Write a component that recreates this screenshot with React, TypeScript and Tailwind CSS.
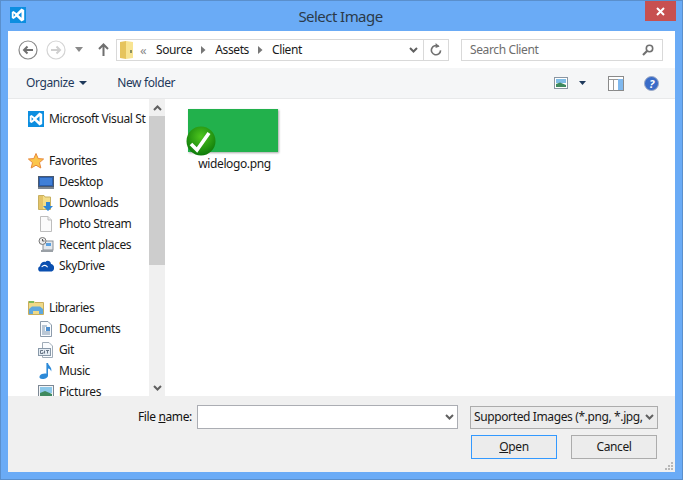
import React from 'react';

const VsIcon = () => (
  <svg width="16" height="16" viewBox="0 0 16 16" className="shrink-0">
    <rect width="16" height="16" fill="#0c8ee0" />
    <path d="M11.5 1.6 L14.2 3 V13 L11.5 14.4 L6.6 9.8 L3.6 12 L1.8 11 V5 L3.6 4 L6.6 6.2 Z" fill="#fff" />
    <path d="M11.5 5.2 L8.4 8 L11.5 10.8 Z M3.6 6.2 V9.8 L5.4 8 Z" fill="#0c8ee0" />
  </svg>
);

const FolderIcon = () => (
  <svg width="13" height="18" viewBox="0 0 13 18" className="shrink-0">
    <path d="M0 1 L6 0 V18 L0 17 Z" fill="#e6c45c" />
    <path d="M6 0 L13 1 V17 L6 18 Z" fill="#f8e492" />
    <rect x="10" y="9" width="2" height="3" fill="#8a8f60" />
  </svg>
);

const Star = () => (
  <svg width="16" height="16" viewBox="0 0 16 16" className="shrink-0">
    <path d="M8 .5 L10.2 5.6 L15.6 6 L11.5 9.6 L12.8 15 L8 12.2 L3.2 15 L4.5 9.6 L.4 6 L5.8 5.6 Z" fill="#fbc64c" stroke="#e8883a" strokeWidth="1" />
  </svg>
);

const Desktop = () => (
  <svg width="16" height="16" viewBox="0 0 16 16" className="shrink-0">
    <rect x="0.5" y="2.5" width="15" height="10" fill="#2a5fb0" stroke="#4a5a70" />
    <rect x="2" y="4" width="12" height="7" fill="#3f7fd8" />
    <rect x="0" y="13" width="16" height="2" fill="#7a8490" />
  </svg>
);

const Downloads = () => (
  <svg width="16" height="16" viewBox="0 0 16 16" className="shrink-0">
    <path d="M.5 .5 H6 L7 2 H12.5 V14.5 H.5 Z" fill="#f3dd88" stroke="#c8b060" strokeWidth="1" />
    <rect x="1" y="1" width="4" height="13" fill="#e3c368" />
    <path d="M8 7 H12 V11 H15 L10 16 L5 11 H8 Z" fill="#2f86d6" />
  </svg>
);

const Page = () => (
  <svg width="16" height="16" viewBox="0 0 16 16" className="shrink-0">
    <path d="M2.5 .5 H10 L13.5 4 V15.5 H2.5 Z" fill="#fbfbfb" stroke="#bdbdbd" />
    <path d="M10 .5 V4 H13.5" fill="#eee" stroke="#bdbdbd" />
  </svg>
);

const Recent = () => (
  <svg width="16" height="16" viewBox="0 0 16 16" className="shrink-0">
    <rect x="5" y="4" width="10" height="9" fill="#e4e8ec" stroke="#8a8f96" />
    <rect x="8" y="6" width="5" height="3" fill="#5aa0e0" />
    <rect x="3" y="13" width="12" height="2" fill="#9aa0a6" />
    <circle cx="4.5" cy="4" r="3.5" fill="#eee" stroke="#777" />
    <path d="M4.5 2 V4 H6.5" fill="none" stroke="#555" />
  </svg>
);

const Cloud = () => (
  <svg width="16" height="16" viewBox="0 0 16 16" className="shrink-0">
    <path d="M2.6 13.5 C-.4 13.5 -.6 9 2 8.2 C2.4 5 5 3.2 7.4 4 C9 1.8 12.6 2.6 13 6 C15.4 6.4 16.8 9 15.8 11.4 C15.2 12.8 14 13.5 13 13.5 Z" fill="#0a4fb0" />
    <path d="M3.6 9 C6 6.4 8.4 7.2 9.6 9.2" fill="none" stroke="#fff" strokeWidth="1.1" />
  </svg>
);

const Libraries = () => (
  <svg width="16" height="16" viewBox="0 0 16 16" className="shrink-0">
    <path d="M.5 1.5 H6 L7 2.5 H15.5 V14.5 H.5 Z" fill="#efd987" stroke="#c9ae5c" />
    <rect x="1" y="1" width="5" height="2" fill="#7dbb5a" />
    <path d="M1 9 L4 6.5 H12 L15 9 V14 H11 V11 H5 V14 H1 Z" fill="#5fa8de" />
  </svg>
);

const Documents = () => (
  <svg width="16" height="16" viewBox="0 0 16 16" className="shrink-0">
    <path d="M2.5 .5 H10 L13.5 4 V15.5 H2.5 Z" fill="#fafcfe" stroke="#8c9bab" />
    <path d="M4 5 H9 M4 7 H7 M4 9 H7 M4 11 H12 M4 13 H12" stroke="#7a93ad" />
    <rect x="8" y="6" width="4" height="4" fill="#4d8fd0" />
  </svg>
);

const Git = () => (
  <svg width="16" height="16" viewBox="0 0 16 16" className="shrink-0">
    <path d="M4.5 .5 H11 L14.5 4 V15.5 H4.5 Z" fill="#fafcfe" stroke="#a0acb8" />
    <rect x="0.5" y="6.5" width="12" height="7" fill="#e4ecf4" stroke="#8898a8" />
    <path d="M5 8.5 H2.5 V11.5 H5 V10 M6.5 8.5 V11.5 M8 8.5 H11 M9.5 8.5 V11.5" fill="none" stroke="#5a6a7a" strokeWidth="0.9" />
  </svg>
);

const Music = () => (
  <svg width="16" height="16" viewBox="0 0 16 16" className="shrink-0">
    <path d="M8.4 0 H10 C10.4 3 14.4 4 13.2 8.6 C12.6 6.4 11.4 5.6 10 5.4 V12.5 C10 14.8 7.4 16 4.6 16 C1.8 16 .8 14.4 1.8 12.8 C2.8 11.2 6 10.2 8.4 10.8 Z" fill="#2d8ad8" />
  </svg>
);

const Pictures = () => (
  <svg width="16" height="14" viewBox="0 0 16 14" className="shrink-0">
    <rect x="0.5" y="0.5" width="15" height="13" fill="#f4f6f8" stroke="#7d8894" />
    <rect x="2" y="2" width="12" height="6" fill="#8cc8ea" />
    <path d="M2 12 V8 L7 6 L14 9 V12 Z" fill="#3f8a5f" />
  </svg>
);

const Chevron = ({ up }: { up?: boolean }) => (
  <svg width="9" height="6" viewBox="0 0 9 6" className={up ? 'rotate-180' : ''}>
    <path d="M1 1 L4.5 4.5 L8 1" fill="none" stroke="#606060" strokeWidth="2" />
  </svg>
);

const Crumb = () => (
  <svg width="5" height="8" viewBox="0 0 5 8" className="mx-[9px] shrink-0">
    <path d="M0 0 L4.5 4 L0 8 Z" fill="#777" />
  </svg>
);

interface NavRow {
  label: string;
  icon?: React.ReactNode;
  sub?: boolean;
}

const navRows: NavRow[] = [
  { label: 'Microsoft Visual St', icon: <VsIcon /> },
  { label: '' },
  { label: 'Favorites', icon: <Star /> },
  { label: 'Desktop', icon: <Desktop />, sub: true },
  { label: 'Downloads', icon: <Downloads />, sub: true },
  { label: 'Photo Stream', icon: <Page />, sub: true },
  { label: 'Recent places', icon: <Recent />, sub: true },
  { label: 'SkyDrive', icon: <Cloud />, sub: true },
  { label: '' },
  { label: 'Libraries', icon: <Libraries /> },
  { label: 'Documents', icon: <Documents />, sub: true },
  { label: 'Git', icon: <Git />, sub: true },
  { label: 'Music', icon: <Music />, sub: true },
  { label: 'Pictures', icon: <Pictures />, sub: true },
];

const App = () => {
  return (
    <div
      className="w-[683px] h-[480px] overflow-hidden flex flex-col bg-[#6aabf6] border border-[#5a8fcc] text-[12px] tracking-[-0.38px] text-[#1a1a1a]"
      style={{ fontFamily: '"Noto Sans", "Open Sans", sans-serif' }}
    >
      {/* title bar */}
      <div className="h-[30px] shrink-0 flex items-start relative">
        <div className="absolute left-[9px] top-[6px]"><VsIcon /></div>
        <div className="flex-1 text-center text-[15px] tracking-[-0.55px] leading-[30px] pr-[2px] text-[#2b3a4a]">Select Image</div>
        <div className="absolute right-[6px] top-0 w-[31px] h-[20px] bg-[#c75050] flex items-center justify-center">
          <svg width="9" height="9" viewBox="0 0 9 9">
            <path d="M1 1 L8 8 M8 1 L1 8" stroke="#fff" strokeWidth="2" />
          </svg>
        </div>
      </div>

      <div className="mx-[7px] flex-1 flex flex-col min-h-0 bg-white">
        {/* nav row */}
        <div className="h-[37px] shrink-0 flex items-center pl-[10px] pr-[12px]">
          <svg width="20" height="20" viewBox="0 0 20 20" className="shrink-0">
            <circle cx="10" cy="10" r="9" fill="#fff" stroke="#8a8a8a" strokeWidth="1.2" />
            <path d="M15 10 H6 M9.5 6.5 L6 10 L9.5 13.5" fill="none" stroke="#707070" strokeWidth="2" />
          </svg>
          <svg width="20" height="20" viewBox="0 0 20 20" className="ml-[8px] shrink-0">
            <circle cx="10" cy="10" r="9" fill="#fff" stroke="#d4d4d4" strokeWidth="1.2" />
            <path d="M5 10 H14 M10.5 6.5 L14 10 L10.5 13.5" fill="none" stroke="#cfcfcf" strokeWidth="2" />
          </svg>
          <svg width="8" height="5" viewBox="0 0 8 5" className="ml-[9px] shrink-0">
            <path d="M0 0 H8 L4 5 Z" fill="#8a8a8a" />
          </svg>
          <svg width="11" height="13" viewBox="0 0 11 13" className="ml-[15px] shrink-0">
            <path d="M5.5 13 V2 M1 6 L5.5 1.5 L10 6" fill="none" stroke="#6f6f6f" strokeWidth="2" />
          </svg>
          <div className="ml-[7px] w-[333px] h-[22px] border border-[#d9d9d9] flex items-center shrink-0">
            <div className="ml-[3px]"><FolderIcon /></div>
            <span className="ml-[7px] w-[16px] text-[#8a8a8a] text-[13px] leading-[18px]">«</span>
            <span>Source</span>
            <Crumb />
            <span>Assets</span>
            <Crumb />
            <span>Client</span>
            <div className="ml-auto mr-[5px]"><Chevron /></div>
            <div className="w-[25px] h-full border-l border-[#d9d9d9] flex items-center justify-center">
              <svg width="12" height="13" viewBox="0 0 12 13">
                <path d="M8.6 3.4 A4.6 4.6 0 1 0 10.6 7.4" fill="none" stroke="#707070" strokeWidth="1.6" />
                <path d="M5.6 0 L9.6 3.6 L5.6 5 Z" fill="#707070" />
              </svg>
            </div>
          </div>
          <div className="ml-[12px] flex-1 h-[22px] border border-[#d9d9d9] flex items-center px-[8px] text-[#6d6d6d]">
            <span>Search Client</span>
            <svg width="12" height="12" viewBox="0 0 12 12" className="ml-auto">
              <circle cx="7.5" cy="4.5" r="3.2" fill="none" stroke="#707070" strokeWidth="1.6" />
              <path d="M5 7 L1 11" stroke="#707070" strokeWidth="2.2" />
            </svg>
          </div>
        </div>

        {/* toolbar */}
        <div className="h-[31px] shrink-0 flex items-center bg-[#f5f6f7] border-b border-[#e8e9ea] pl-[18px] pr-[16px] text-[#1e395b]">
          <span>Organize</span>
          <svg width="8" height="4" viewBox="0 0 8 4" className="ml-[5px]">
            <path d="M0 0 H8 L4 4 Z" fill="#1e395b" />
          </svg>
          <span className="ml-[30px]">New folder</span>
          <svg width="14" height="12" viewBox="0 0 14 12" className="ml-auto">
            <rect x="0.5" y="0.5" width="13" height="11" fill="#fff" stroke="#8a96a2" />
            <rect x="2" y="2" width="10" height="4" fill="#7fbde6" />
            <path d="M2 10 V7 L6 5.5 L12 8 V10 Z" fill="#3f8a5f" />
          </svg>
          <svg width="7" height="4" viewBox="0 0 7 4" className="ml-[11px]">
            <path d="M0 0 H7 L3.5 4 Z" fill="#1e395b" />
          </svg>
          <svg width="16" height="15" viewBox="0 0 16 15" className="ml-[22px]">
            <rect x="0.5" y="0.5" width="15" height="14" fill="#fff" stroke="#8a8a8a" />
            <path d="M0.5 3.5 H15.5 M5.5 3.5 V14.5" stroke="#9a9a9a" />
            <rect x="10" y="3" width="5" height="11" fill="#7fb8ee" />
          </svg>
          <svg width="15" height="15" viewBox="0 0 15 15" className="ml-[20px]">
            <circle cx="7.5" cy="7.5" r="7" fill="#3a6cc8" stroke="#9aa8c4" />
            <text x="7.5" y="11.5" textAnchor="middle" fontSize="11" fontWeight="700" fontStyle="italic" fill="#fff">?</text>
          </svg>
        </div>

        {/* middle */}
        <div className="flex-1 min-h-0 flex">
          <div className="w-[141px] shrink-0 overflow-hidden pt-[9px]">
            {navRows.map((row, index) => (
              <div
                key={index}
                className={'h-[21px] flex items-center gap-[5px] whitespace-nowrap ' + (row.sub ? 'pl-[30px]' : 'pl-[20px]')}
              >
                {row.icon}
                <span>{row.label}</span>
              </div>
            ))}
          </div>
          <div className="w-[16px] shrink-0 bg-[#f0f0f0] flex flex-col">
            <div className="h-[17px] flex items-center justify-center"><Chevron up /></div>
            <div className="h-[149px] bg-[#cdcdcd]" />
            <div className="mt-auto h-[17px] flex items-center justify-center"><Chevron /></div>
          </div>
          <div className="flex-1 pl-[23px] pt-[10px]">
            <div className="w-[90px] relative">
              <div className="h-[43px] bg-[#22b14c] shadow-[1px_1px_2px_rgba(0,0,0,0.35)]" />
              <div className="mt-[4px] text-center leading-[16px] pl-[3px]">widelogo.png</div>
              <svg width="30" height="30" viewBox="0 0 30 30" className="absolute left-[-2px] top-[17px]">
                <defs>
                  <radialGradient id="tick" cx="50%" cy="35%" r="65%">
                    <stop offset="0%" stopColor="#4fc61e" />
                    <stop offset="100%" stopColor="#0d7a0a" />
                  </radialGradient>
                </defs>
                <circle cx="15" cy="15" r="14.5" fill="url(#tick)" />
                <path d="M5 18 L11 24 L23 7" fill="none" stroke="#fff" strokeWidth="3.6" />
              </svg>
            </div>
          </div>
        </div>

        {/* bottom panel */}
        <div className="h-[76px] shrink-0 bg-[#f0f0f0] relative">
          <div className="flex items-center h-[24px] mt-[9px] pl-[130px]">
            <span className="w-[59px] text-[#111]">File <span className="underline">n</span>ame:</span>
            <div className="w-[261px] h-[24px] bg-white border border-[#abadb3] flex items-center justify-end pr-[3px]">
              <Chevron />
            </div>
            <div className="ml-[12px] w-[188px] h-[23px] border border-[#acacac] bg-[#ececec] flex items-center pl-[3px] pr-[3px] whitespace-nowrap">
              <span>Supported Images (*.png, *.jpg,</span>
              <div className="ml-auto"><Chevron /></div>
            </div>
          </div>
          <div className="flex mt-[6px] pl-[463px] gap-[14px]">
            <div className="w-[86px] h-[24px] border border-[#3399ff] bg-[#ececec] flex items-center justify-center">
              <span><span className="underline">O</span>pen</span>
            </div>
            <div className="w-[86px] h-[24px] border border-[#acacac] bg-[#ececec] flex items-center justify-center">Cancel</div>
          </div>
          <svg width="9" height="9" viewBox="0 0 9 9" className="absolute right-[1px] bottom-[1px]">
            <path d="M6 0 H8 V2 H6 Z M3 3 H5 V5 H3 Z M6 3 H8 V5 H6 Z M0 6 H2 V8 H0 Z M3 6 H5 V8 H3 Z M6 6 H8 V8 H6 Z" fill="#b8b8b8" />
          </svg>
        </div>
      </div>
      <div className="h-[7px] shrink-0" />
    </div>
  );
};

export default App;
